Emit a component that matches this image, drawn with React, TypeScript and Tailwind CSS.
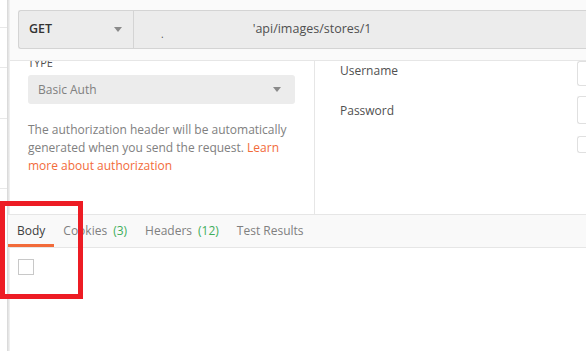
import React from 'react';

function Caret({ className }: { className?: string }) {
  return (
    <svg width="8" height="5" viewBox="0 0 8 5" className={className}>
      <path d="M0 0h8L4 5z" fill="#8a8a8a" />
    </svg>
  );
}

export default function App() {
  const tabs = [
    { label: 'Body', count: '', active: true },
    { label: 'Cookies', count: '(3)', active: false },
    { label: 'Headers', count: '(12)', active: false },
    { label: 'Test Results', count: '', active: false },
  ];

  return (
    <div
      className="relative flex h-[351px] w-[586px] overflow-hidden bg-white text-[#505050]"
      style={{ fontFamily: '"Open Sans", "Noto Sans", sans-serif' }}
    >
      {/* sidebar edge */}
      <div className="flex w-[7px] shrink-0 flex-col bg-white">
        <div className="h-[28px] border-b border-[#e8e8e8]" />
        <div className="h-[40px] border-b border-[#e8e8e8]" />
        <div className="h-[51px] border-b border-[#e8e8e8]" />
        <div className="h-[70px] border-b border-[#e8e8e8]" />
      </div>
      <div className="w-[3px] shrink-0 bg-gradient-to-r from-[#d6d6d6] to-[#f4f4f4]" />

      <div className="flex min-w-0 flex-1 flex-col">
        {/* url bar */}
        <div className="h-[61px] shrink-0 border-b border-[#e6e6e6] bg-[#fafafa] pl-[8px] pt-[10px]">
          <div className="flex h-[39px] rounded-l-[3px] border border-r-0 border-[#d4d4d4] bg-[#ececec]">
            <div className="flex w-[115px] shrink-0 items-center justify-between border-r border-[#d4d4d4] pl-[10px] pr-[11px]">
              <span className="text-[12.5px] font-semibold text-[#333]">GET</span>
              <Caret />
            </div>
            <div className="flex flex-1 items-center whitespace-nowrap text-[12.5px] text-[#505050]">
              <span className="ml-[27px] mt-[8px] text-[10px] leading-none">.</span>
              <span className="ml-[89px]">'api/images/stores/1</span>
            </div>
          </div>
        </div>

        {/* auth area */}
        <div className="flex h-[153px] shrink-0">
          <div className="w-[305px] shrink-0 overflow-hidden border-r border-[#e6e6e6] pl-[18px]">
            <div className="-mt-[4px] text-[11px] leading-[12px] text-[#505050]">TYPE</div>
            <div className="mt-[6px] flex h-[29px] w-[267px] items-center justify-between rounded-[3px] bg-[#ececec] pl-[10px] pr-[14px]">
              <span className="text-[12px] text-[#808080]">Basic Auth</span>
              <Caret />
            </div>
            <p className="mt-[17px] w-[270px] text-[12px] leading-[18px] text-[#808080]">
              The authorization header will be automatically generated when you send the request.{' '}
              <span className="text-[#f26b3a]">Learn more about authorization</span>
            </p>
          </div>
          <div className="flex flex-1">
            <div className="flex w-[262px] flex-col pl-[25px] text-[12px] text-[#505050]">
              <div className="flex h-[20px] items-center">Username</div>
              <div className="mt-[20px] flex h-[20px] items-center">Password</div>
            </div>
            <div className="flex flex-col">
              <div className="h-[25px] w-[20px] rounded-l-[3px] border border-r-0 border-[#e0e0e0]" />
              <div className="mt-[10px] h-[28px] w-[20px] rounded-l-[3px] border border-r-0 border-[#e0e0e0]" />
              <div className="mt-[12px] h-[17px] w-[20px] rounded-l-[3px] border border-r-0 border-[#e0e0e0]" />
            </div>
          </div>
        </div>

        {/* response tabs */}
        <div className="-ml-[2px] flex h-[34px] shrink-0 items-stretch border-y border-[#e6e6e6] bg-[#f9f9f9]">
          {tabs.map((t) => (
            <div
              key={t.label}
              className={
                'flex items-center whitespace-nowrap border-b-[3px] px-[9px] pt-[3px] text-[12px] ' +
                (t.active ? 'border-[#f26b3a] text-[#404040]' : 'border-transparent text-[#808080]')
              }
            >
              {t.label}
              {t.count && <span className="ml-[6px] text-[#3fae5a]">{t.count}</span>}
            </div>
          ))}
        </div>

        <div className="flex-1 pl-[8px] pt-[11px]">
          <div className="h-[16px] w-[16px] border border-[#c8c8c8]" />
        </div>
      </div>

      {/* annotation */}
      <div className="absolute left-0 top-[201px] h-[98px] w-[83px] border-[5px] border-[#ed1c24]" />
    </div>
  );
}
